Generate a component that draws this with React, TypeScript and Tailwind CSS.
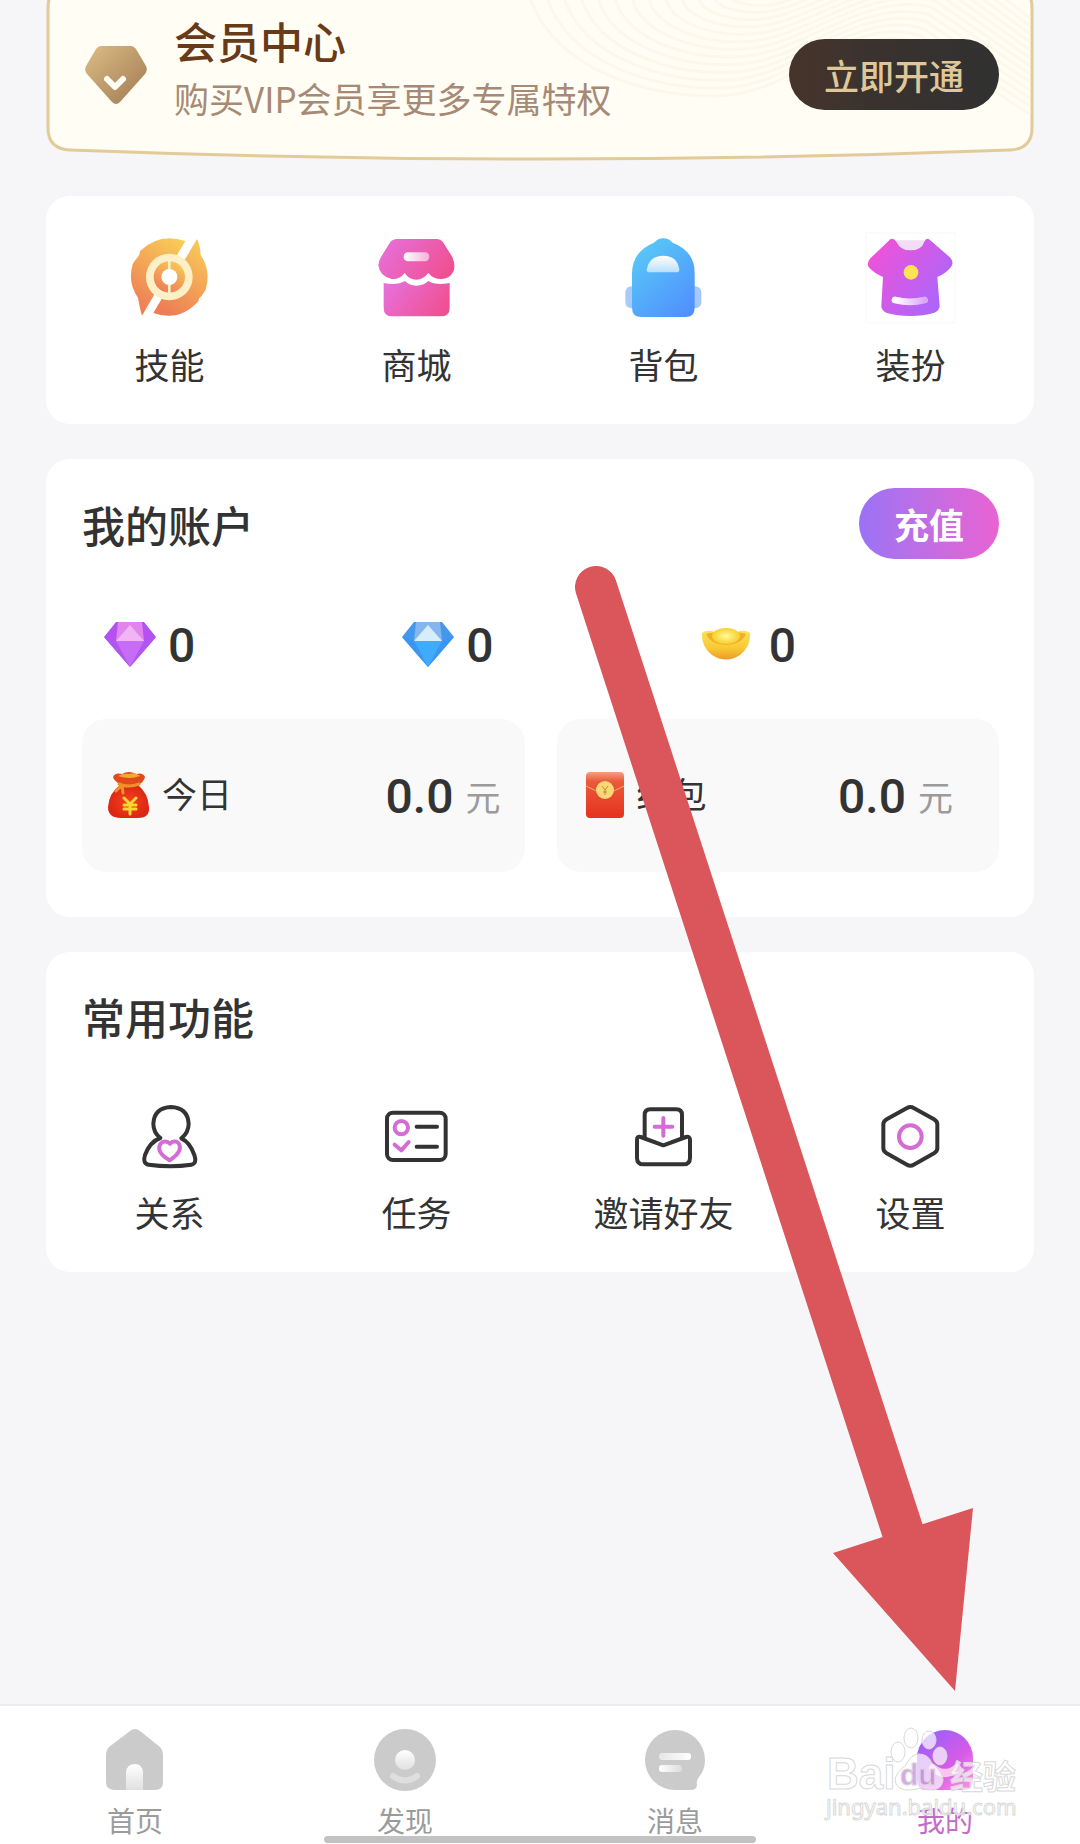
import type { ReactNode } from 'react';

const INK = '#333333';
const PINK = '#d56bd5';

function MemberCardShape() {
  return (
    <svg
      className="absolute inset-0 h-full w-full"
      viewBox="0 0 988 161"
      preserveAspectRatio="none"
      fill="none"
      aria-hidden="true"
    >
      <path
        d="M24 -16Q2 -14 2 8V128Q2 149 24 150Q494 168 964 150Q986 149 986 128V8Q986 -14 964 -16Z"
        fill="#fffdf4"
        stroke="#e2cb98"
        strokeWidth="3"
      />
      <g stroke="#fcf8ec" strokeWidth="3">
        {Array.from({ length: 13 }, (_, i) => (
          <path
            key={i}
            d={`M${484 + i * 17} -2C${510 + i * 14} ${70 - i * 6} ${600 + i * 9} ${97 - i * 7} ${672 + i * 6} ${96 - i * 8}S${800 + i * 4} ${22 - i * 6} ${870 + i * 3} ${42 - i * 7}T984 ${114 - i * 8}`}
          />
        ))}
      </g>
    </svg>
  );
}

function VipGem() {
  return (
    <svg width="64" height="60" viewBox="0 0 64 60" fill="none" aria-hidden="true">
      <defs>
        <linearGradient id="vip" x1="0" y1="0" x2="1" y2="1">
          <stop offset="0" stopColor="#dcbd86" />
          <stop offset="1" stopColor="#a07852" />
        </linearGradient>
      </defs>
      <path d="M17 1H47Q50 1 52 4L62 21Q64 25 61 29L36 57Q32 61 28 57L3 29Q0 25 2 21L12 4Q14 1 17 1Z" fill="url(#vip)" />
      <path d="M23 34L31 42L39 34" stroke="#fffdf4" strokeWidth="6" strokeLinecap="round" strokeLinejoin="round" />
    </svg>
  );
}

function SkillIcon() {
  return (
    <svg width="80" height="80" viewBox="2 -3 240 240" className="overflow-visible" aria-hidden="true">
      <defs>
        <linearGradient id="skill" x1="0.8" y1="0" x2="0.3" y2="1">
          <stop offset="0" stopColor="#f8cb58" />
          <stop offset="1" stopColor="#ee7c55" />
        </linearGradient>
      </defs>
      <path d="M168 12Q90 -14 32 42Q32 52 24 62Q14 72 10 82Q-6 138 26 182Q32 216 38 236Z" fill="url(#skill)" />
      <path d="M203 6L72 228Q150 256 208 192Q206 184 214 180Q222 170 229 158Q246 100 214 54Q212 22 203 6Z" fill="url(#skill)" />
      <circle cx="120" cy="120" r="70" fill="#fdf0c6" />
      <circle cx="120" cy="120" r="47" fill="url(#skill)" />
      <path d="M120 64V176" stroke="#fdf0c6" strokeWidth="8" />
      <circle cx="120" cy="120" r="24" fill="#fff" />
    </svg>
  );
}

function ShopIcon() {
  return (
    <svg width="80" height="80" viewBox="2 -3 240 240" className="overflow-visible" aria-hidden="true">
      <defs>
        <linearGradient id="shop" x1="0" y1="0.3" x2="1" y2="0.7">
          <stop offset="0" stopColor="#e76fd8" />
          <stop offset="1" stopColor="#f04f90" />
        </linearGradient>
        <linearGradient id="shopTag">
          <stop offset="0" stopColor="#fff" />
          <stop offset="1" stopColor="#f6b0da" />
        </linearGradient>
      </defs>
      <path d="M62 6H180Q195 6 203 20L228 60Q238 84 232 102Q220 126 195 126Q170 126 156 108Q140 128 120 128Q98 128 85 108Q70 128 46 126Q10 118 6 85Q7 72 14 60L40 18Q48 6 62 6Z" fill="url(#shop)" />
      <path d="M22 138Q62 146 86 132Q100 146 120 146Q142 146 156 132Q178 146 220 138V212Q220 238 194 238H48Q22 238 22 212Z" fill="url(#shop)" />
      <rect x="82" y="46" width="77" height="27" rx="13" fill="url(#shopTag)" />
    </svg>
  );
}

function BackpackIcon() {
  return (
    <svg width="80" height="80" viewBox="2 -3 240 240" className="overflow-visible" aria-hidden="true">
      <defs>
        <linearGradient id="pack" x1="0.2" y1="0" x2="0.9" y2="1">
          <stop offset="0" stopColor="#58caf6" />
          <stop offset="1" stopColor="#508eff" />
        </linearGradient>
        <linearGradient id="packWindow" x1="0" y1="0" x2="0" y2="1">
          <stop offset="0" stopColor="#fff" />
          <stop offset="1" stopColor="#b9e0fb" />
        </linearGradient>
      </defs>
      <rect x="6" y="148" width="40" height="66" rx="18" fill="#a8cbf8" />
      <rect x="194" y="148" width="40" height="66" rx="18" fill="#a8c8fa" />
      <path d="M120 4Q136 4 148 17Q214 42 214 108V212Q214 240 186 240H54Q26 240 26 212V108Q28 42 92 17Q104 4 120 4Z" fill="url(#pack)" />
      <path d="M70 98Q78 56 120 56Q162 56 168 98Q168 106 160 106H78Q70 106 70 98Z" fill="url(#packWindow)" />
    </svg>
  );
}

function ShirtIcon() {
  return (
    <svg width="80" height="80" viewBox="2 -3 240 240" className="overflow-visible" aria-hidden="true">
      <defs>
        <linearGradient id="shirt" x1="0" y1="0.2" x2="0.9" y2="0.8">
          <stop offset="0" stopColor="#f052d8" />
          <stop offset="1" stopColor="#ab66fb" />
        </linearGradient>
        <linearGradient id="shirtHem">
          <stop offset="0" stopColor="#fff" />
          <stop offset="1" stopColor="#d9a9f8" />
        </linearGradient>
      </defs>
      <rect x="-13" y="-13" width="268" height="270" stroke="#fafafa" strokeWidth="4" fill="none" />
      <path d="M72 10H168Q156 46 122 46Q88 46 72 10Z" fill="#f3dcf6" />
      <path d="M60 7Q70 2 78 14Q90 40 120 40Q154 40 162 14Q168 0 178 8L240 62Q252 76 242 90Q226 110 201 120L208 206Q208 220 190 228Q160 237 120 237Q80 237 50 228Q32 220 33 206L38 120Q10 108 -5 90Q-12 78 0 64Z" fill="url(#shirt)" />
      <circle cx="122" cy="106" r="22" fill="#ffe352" />
      <path d="M74 189Q120 200 163 189" stroke="url(#shirtHem)" strokeWidth="20" strokeLinecap="round" fill="none" />
    </svg>
  );
}

function LineIcon({ children }: { children: ReactNode }) {
  return (
    <svg
      width="64"
      height="64"
      viewBox="2 -1 192 192"
      fill="none"
      stroke={INK}
      strokeWidth="12"
      strokeLinecap="round"
      strokeLinejoin="round"
      className="overflow-visible"
      aria-hidden="true"
    >
      {children}
    </svg>
  );
}

function RelationIcon() {
  return (
    <LineIcon>
      <path d="M69 101Q48 84 48 58Q51 10 101 8Q151 10 154 58Q154 84 132 102Q158 114 171 152Q180 178 162 181Q100 190 34 181Q15 178 23 152Q38 112 69 101" />
      <path stroke={PINK} d="M98 118Q88 108 76 113Q64 120 66 136Q70 152 97 168Q122 152 127 136Q130 118 118 112Q105 109 98 118Z" />
    </LineIcon>
  );
}

function TaskIcon() {
  return (
    <LineIcon>
      <rect x="8" y="25" width="176" height="142" rx="18" />
      <path d="M97 67H158M97 127H158" />
      <circle stroke={PINK} cx="51" cy="70" r="20" />
      <path stroke={PINK} d="M31 121L51 138L73 113" />
    </LineIcon>
  );
}

function InviteIcon() {
  return (
    <LineIcon>
      <path d="M40 98V32Q40 15 57 15H135Q152 15 152 32V98" />
      <path d="M17 107Q16 95 28 98L96 123L164 98Q176 95 176 107V160Q176 180 156 180H37Q17 180 17 160Z" />
      <path stroke={PINK} d="M70 67H123M96 41V94" />
    </LineIcon>
  );
}

function SettingsIcon() {
  return (
    <LineIcon>
      <path d="M86 11Q96 5 106 11L167 45Q177 51 177 60V132Q177 141 167 147L106 181Q96 187 86 181L25 147Q15 141 15 132V60Q15 51 25 45Z" />
      <circle stroke={PINK} cx="96" cy="97" r="34" />
    </LineIcon>
  );
}

interface GemColors {
  top: string;
  table: string;
  side: string;
  body: string;
  edge: string;
}

function Gem({ colors }: { colors: GemColors }) {
  return (
    <svg width="52" height="46" viewBox="0 1 52 46" aria-hidden="true">
      <path d="M12 1H40L52 16L26 46L0 16Z" fill={colors.side} />
      <path d="M0 16L13 20L26 46Z" fill={colors.edge} />
      <path d="M52 16L39 20L26 46Z" fill={colors.edge} />
      <path d="M14 1H38L40 20H12Z" fill={colors.top} />
      <path d="M12 20L26 4L40 20Z" fill={colors.table} />
      <path d="M12 20H40L26 46Z" fill={colors.body} />
    </svg>
  );
}

function Ingot() {
  return (
    <svg width="50" height="34" viewBox="0 0 50 34" aria-hidden="true">
      <defs>
        <linearGradient id="ingot" x1="0" y1="0" x2="0" y2="1">
          <stop offset="0" stopColor="#fbe25a" />
          <stop offset="0.6" stopColor="#f8c934" />
          <stop offset="1" stopColor="#ee9a26" />
        </linearGradient>
        <radialGradient id="ingotTop">
          <stop offset="0" stopColor="#fffa9a" />
          <stop offset="1" stopColor="#f9cf2c" />
        </radialGradient>
      </defs>
      <path d="M1 5Q6 1 14 4H36Q44 1 49 5Q50 18 39 27Q25 36 11 27Q0 18 1 5Z" fill="url(#ingot)" />
      <path d="M5 6Q9 16 25 17Q41 16 45 6Q38 3 25 6Q12 3 5 6Z" fill="#f0b02c" />
      <ellipse cx="25" cy="8" rx="14" ry="8" fill="url(#ingotTop)" />
    </svg>
  );
}

function MoneyBag() {
  return (
    <svg width="48" height="48" viewBox="0 1 48 48" className="overflow-visible" fill="none" aria-hidden="true">
      <defs>
        <radialGradient id="bag">
          <stop offset="0" stopColor="#f4431c" />
          <stop offset="1" stopColor="#dc2716" />
        </radialGradient>
      </defs>
      <path d="M14 14Q3 22 2 36Q2 47 15 47H32Q44 47 43 36Q42 22 32 14Z" fill="url(#bag)" />
      <path d="M7 6Q9 1 16 3Q23 -1 30 3Q37 1 39 6Q38 11 32 14Q23 17 14 13Q8 10 7 6Z" fill="#e04a1c" />
      <path d="M12 5Q18 2 23 3Q30 1 34 5Q24 9 12 5Z" fill="#fba62c" />
      <path d="M13 13Q23 17 33 13M16 14L10 20M16 14L17 22" stroke="#f2912a" strokeWidth="3" strokeLinecap="round" />
      <path d="M18 27L24 33L30 27M24 33V43M18 34H30M18 38H30" stroke="#ffd633" strokeWidth="3" strokeLinecap="round" />
    </svg>
  );
}

function RedEnvelope() {
  return (
    <svg width="48" height="48" viewBox="0 1 48 48" fill="none" aria-hidden="true">
      <defs>
        <linearGradient id="env" x1="0" y1="0" x2="0" y2="1">
          <stop offset="0" stopColor="#f5a183" />
          <stop offset="0.2" stopColor="#e95b3a" />
          <stop offset="1" stopColor="#e6311f" />
        </linearGradient>
      </defs>
      <rect x="5" y="1" width="38" height="46" rx="4" fill="url(#env)" />
      <path d="M5 15Q14 21 24 21Q34 21 43 15" stroke="#f5b070" strokeWidth="1" />
      <circle cx="24" cy="19" r="9" fill="#f8d878" />
      <path d="M21 15L24 19L27 15M24 19V24M22 21H26" stroke="#c58b2c" strokeWidth="1" />
    </svg>
  );
}

function HomeIcon() {
  return (
    <svg width="64" height="64" viewBox="0 0 64 64" aria-hidden="true">
      <defs>
        <linearGradient id="fade" x1="0" y1="0" x2="0" y2="1">
          <stop offset="0" stopColor="#fff" />
          <stop offset="1" stopColor="#e0e0e0" />
        </linearGradient>
      </defs>
      <path d="M27 3Q32 -1 37 3L57 19Q60 22 60 26V54Q60 62 52 62H12Q3 62 3 54V26Q3 22 6 19Z" fill="#cbcbcb" />
      <path d="M23 62V44Q24 36 32 36Q39 36 40 44V62Z" fill="url(#fade)" />
    </svg>
  );
}

function DiscoverIcon() {
  return (
    <svg width="64" height="64" viewBox="0 0 64 64" aria-hidden="true">
      <circle cx="32" cy="32" r="31" fill="#cbcbcb" />
      <circle cx="32" cy="32" r="10" fill="url(#fade)" />
      <path d="M20 48Q32 57 44 48" stroke="#dedede" strokeWidth="6" strokeLinecap="round" fill="none" />
    </svg>
  );
}

function MessageIcon() {
  return (
    <svg width="64" height="64" viewBox="0 0 64 64" aria-hidden="true">
      <defs>
        <linearGradient id="msgA">
          <stop offset="0" stopColor="#e6e6e6" />
          <stop offset="1" stopColor="#fff" />
        </linearGradient>
        <linearGradient id="msgB">
          <stop offset="0" stopColor="#fff" />
          <stop offset="1" stopColor="#dcdcdc" />
        </linearGradient>
      </defs>
      <path d="M32 2A30 30 0 0 1 62 32Q62 42 56 49Q53 53 54 57Q54 62 47 62H32A30 30 0 0 1 32 2Z" fill="#cbcbcb" />
      <rect x="16" y="25" width="32" height="7" rx="3" fill="url(#msgA)" />
      <rect x="16" y="37" width="23" height="7" rx="3" fill="url(#msgB)" />
    </svg>
  );
}

function MineIcon() {
  return (
    <svg width="64" height="64" viewBox="0 0 64 64" aria-hidden="true">
      <defs>
        <linearGradient id="mine" x1="0.1" y1="0.1" x2="0.8" y2="1">
          <stop offset="0" stopColor="#9a5ffa" />
          <stop offset="0.6" stopColor="#d65be6" />
          <stop offset="1" stopColor="#f58ae6" />
        </linearGradient>
      </defs>
      <path d="M4 30A28 28 0 0 1 60 30V52Q60 62 50 62H14Q4 62 4 52Z" fill="url(#mine)" />
      <path d="M20 40Q32 50 44 40" stroke="#fbc4f2" strokeWidth="8" strokeLinecap="round" fill="none" />
    </svg>
  );
}

function Watermark() {
  return (
    <svg
      className="pointer-events-none absolute right-[54px] bottom-[14px]"
      width="204"
      height="104"
      viewBox="0 0 204 104"
      fill="#ffffff"
      fillOpacity="0.7"
      stroke="#d9d9d9"
      strokeWidth="1"
      role="img"
      aria-label="Baidu 经验"
    >
      <text x="5" y="63" fontSize="44" fontWeight="700" fontFamily="Liberation Sans, Arial, sans-serif">
        Bai
      </text>
      <ellipse cx="76" cy="26" rx="7" ry="10" />
      <ellipse cx="89" cy="12" rx="7" ry="10" />
      <ellipse cx="107" cy="14" rx="7" ry="9" />
      <ellipse cx="118" cy="30" rx="7" ry="9" />
      <path d="M97 28Q106 28 110 37Q122 47 121 55Q119 65 107 64Q97 61 89 64Q75 65 73 55Q73 47 84 39Q89 28 97 28Z" />
      <text x="78" y="59" fontSize="30" fontWeight="700" fontFamily="Liberation Sans, Arial, sans-serif" fill="#b44fd2" fillOpacity="0.5">
        du
      </text>
      <text x="128" y="63" fontSize="33" fontWeight="700" fontFamily="Noto Sans CJK SC, sans-serif">
        经验
      </text>
      <text x="4" y="89" fontSize="22" fontFamily="Noto Sans, sans-serif">
        jingyan.baidu.com
      </text>
    </svg>
  );
}

function GuideArrow() {
  return (
    <svg className="pointer-events-none absolute inset-0 h-full w-full" viewBox="0 0 1080 1844" aria-hidden="true">
      <path d="M596 587L903 1532" stroke="#da565a" strokeWidth="42" strokeLinecap="round" />
      <path d="M833 1553L973 1508L955 1691Z" fill="#da565a" />
    </svg>
  );
}

const SHORTCUTS = [
  { label: '技能', icon: <SkillIcon /> },
  { label: '商城', icon: <ShopIcon /> },
  { label: '背包', icon: <BackpackIcon /> },
  { label: '装扮', icon: <ShirtIcon /> },
];

const FEATURES = [
  { label: '关系', icon: <RelationIcon /> },
  { label: '任务', icon: <TaskIcon /> },
  { label: '邀请好友', icon: <InviteIcon /> },
  { label: '设置', icon: <SettingsIcon /> },
];

const TABS = [
  { label: '首页', icon: <HomeIcon />, active: false },
  { label: '发现', icon: <DiscoverIcon />, active: false },
  { label: '消息', icon: <MessageIcon />, active: false },
  { label: '我的', icon: <MineIcon />, active: true },
];

const PURPLE_GEM = { top: '#e184ec', table: '#f1b4f5', side: '#b551f3', body: '#c76cf6', edge: '#b056f0' };
const BLUE_GEM = { top: '#86b7ec', table: '#d6eefc', side: '#4398ee', body: '#40aafb', edge: '#3a96f2' };

function Amount({ children }: { children: ReactNode }) {
  return <span className="pt-[3px] font-[Roboto,sans-serif] text-[48px] leading-[48px] font-medium">{children}</span>;
}

export default function App() {
  return (
    <div className="relative flex min-h-screen flex-col bg-[#f6f6f9] font-['Noto_Sans_CJK_SC',sans-serif] text-[#333333]">
      <main className="flex flex-col gap-[35px] px-[46px]">
        <section className="relative flex items-center pr-[35px] pb-3 pl-[38px]">
          <MemberCardShape />
          <div className="relative shrink-0">
            <VipGem />
          </div>
          <div className="relative ml-[26px] flex flex-1 flex-col gap-1.5 pt-[14px] pb-[25px]">
            <h2 className="text-[43px] leading-[52px] font-medium text-[#683a17]">会员中心</h2>
            <p className="text-[35px] leading-[52px] text-[#a68a75]">购买VIP会员享更多专属特权</p>
          </div>
          <button className="relative h-[71px] w-[210px] rounded-full bg-linear-to-r from-[#46342b] via-[#38322f] to-[#313131] text-[35px] leading-[48px] font-medium text-[#dfc799]">
            立即开通
          </button>
        </section>

        <section className="grid grid-cols-4 rounded-3xl bg-white pt-10 pb-9">
          {SHORTCUTS.map(s => (
            <button key={s.label} className="flex flex-col items-center gap-6">
              {s.icon}
              <span className="text-[35px] leading-[48px]">{s.label}</span>
            </button>
          ))}
        </section>

        <section className="rounded-3xl bg-white pt-[29px] pr-[35px] pb-[45px] pl-9">
          <div className="flex items-center justify-between">
            <h2 className="text-[43px] leading-[56px] font-medium">我的账户</h2>
            <button className="h-[71px] w-[140px] rounded-full bg-linear-to-r from-[#9a72f5] to-[#e962d2] text-[35px] leading-[48px] font-bold text-white">
              充值
            </button>
          </div>

          <div className="mt-[60px] grid h-12 grid-cols-3 pl-[22px]">
            <div className="flex items-center gap-3">
              <Gem colors={PURPLE_GEM} />
              <Amount>0</Amount>
            </div>
            <div className="flex items-center gap-3">
              <Gem colors={BLUE_GEM} />
              <Amount>0</Amount>
            </div>
            <div className="flex items-center gap-[18px]">
              <Ingot />
              <Amount>0</Amount>
            </div>
          </div>

          <div className="mt-[52px] grid grid-cols-2 gap-8">
            <div className="flex h-[153px] items-center rounded-3xl bg-[#f9f9f9] px-6">
              <MoneyBag />
              <span className="ml-2 pb-1.5 text-[35px] leading-[48px]">今日</span>
              <div className="ml-auto flex items-center gap-3">
                <Amount>0.0</Amount>
                <span className="text-[35px] leading-[48px] text-[#9b9b9b]">元</span>
              </div>
            </div>
            <div className="flex h-[153px] items-center rounded-3xl bg-[#f9f9f9] pr-[46px] pl-6">
              <RedEnvelope />
              <span className="ml-2 pb-1.5 text-[35px] leading-[48px]">红包</span>
              <div className="ml-auto flex items-center gap-3">
                <Amount>0.0</Amount>
                <span className="text-[35px] leading-[48px] text-[#9b9b9b]">元</span>
              </div>
            </div>
          </div>
        </section>

        <section className="rounded-3xl bg-white pt-9 pb-9">
          <h2 className="pl-9 text-[43px] leading-[56px] font-medium">常用功能</h2>
          <div className="mt-[60px] grid grid-cols-4">
            {FEATURES.map(f => (
              <button key={f.label} className="flex flex-col items-center gap-5">
                {f.icon}
                <span className="text-[35px] leading-[48px]">{f.label}</span>
              </button>
            ))}
          </div>
        </section>
      </main>

      <nav className="relative mt-auto border-t-2 border-[#ededef] bg-white pt-[22px] pb-px">
        <div className="grid grid-cols-4">
          {TABS.map(t => (
            <a
              key={t.label}
              href="#"
              className={`flex flex-col items-center gap-3 ${t.active ? 'text-[#c26cc8]' : 'text-[#9b9b9b]'}`}
            >
              {t.icon}
              <span className="text-[28px] leading-[32px]">{t.label}</span>
            </a>
          ))}
        </div>
        <div className="mx-auto h-[7px] w-2/5 rounded-full bg-[#c2c2c2]" />
        <Watermark />
      </nav>

      <GuideArrow />
    </div>
  );
}
